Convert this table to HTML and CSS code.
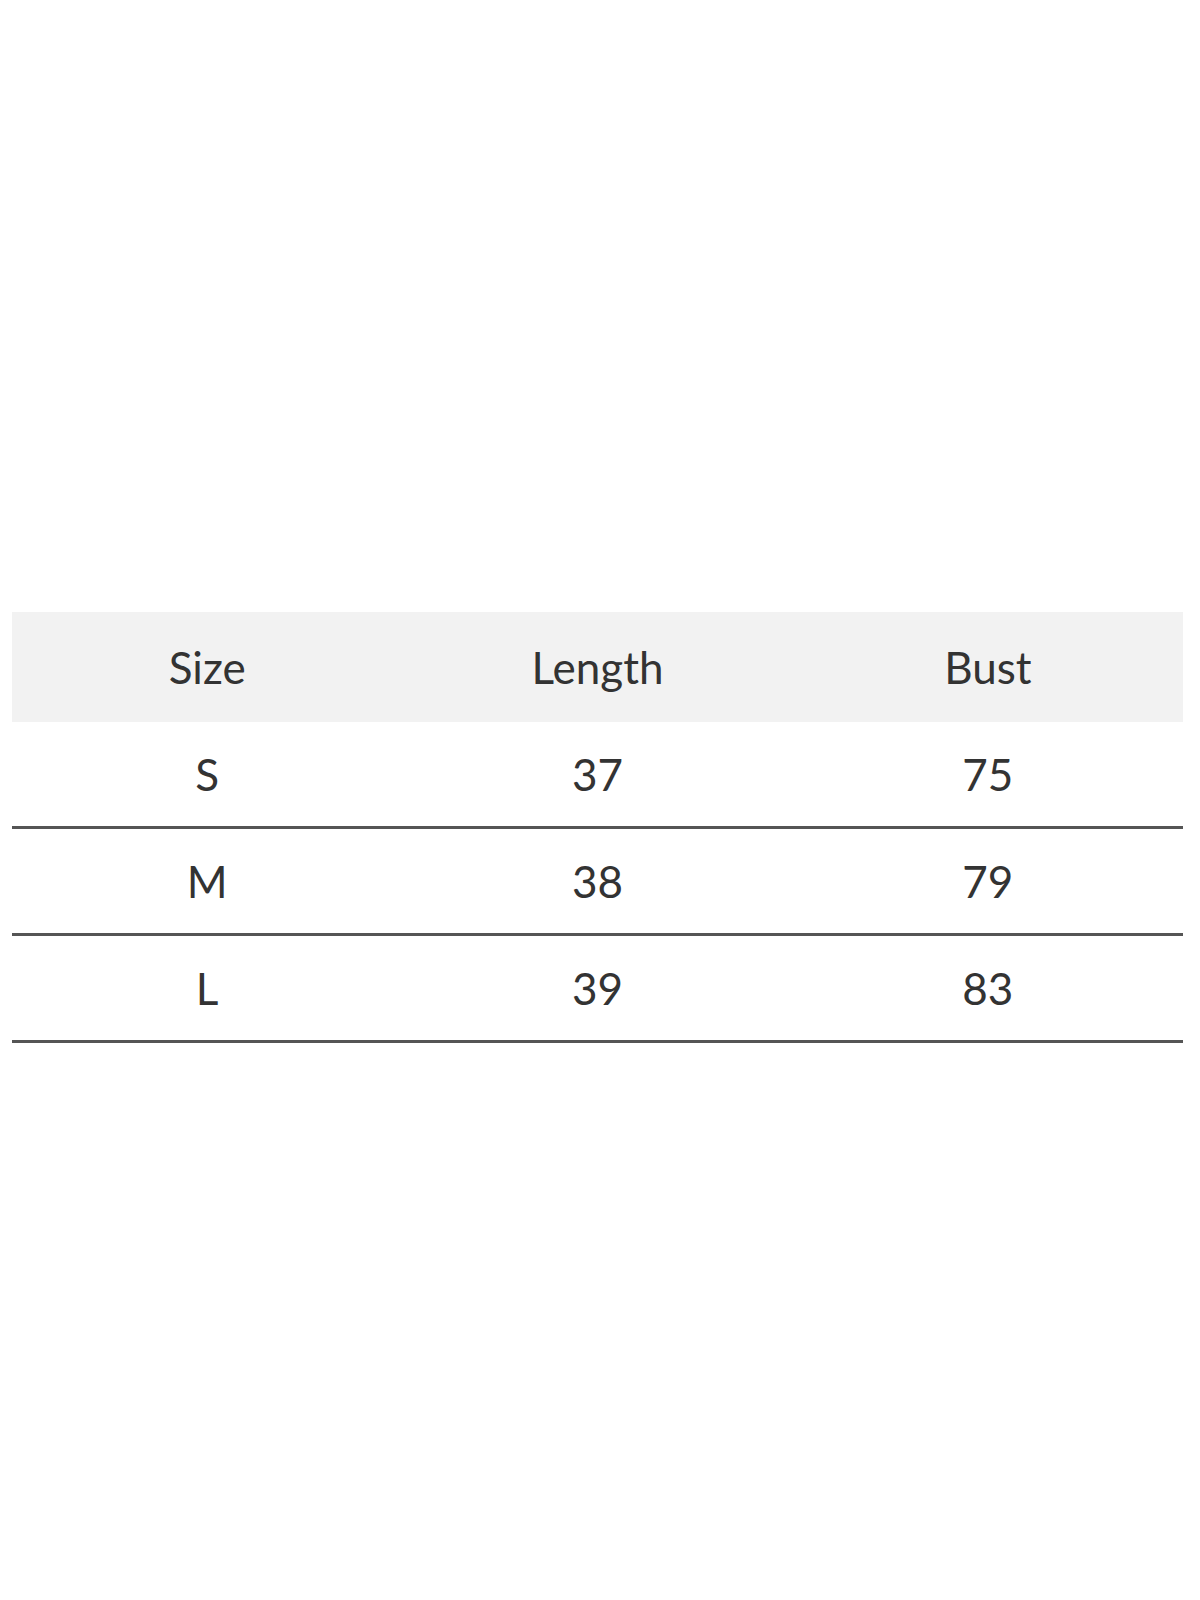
FILE: index.html
```html
<!DOCTYPE html>
<html>
<head>
<meta charset="utf-8">
<link rel="stylesheet" href="styles.css">
</head>
<body>
<div class="page">
  <div class="table">
    <div class="row head">
      <div class="cell">Size</div>
      <div class="cell">Length</div>
      <div class="cell">Bust</div>
    </div>
    <div class="row">
      <div class="cell">S</div>
      <div class="cell">37</div>
      <div class="cell">75</div>
    </div>
    <div class="row">
      <div class="cell">M</div>
      <div class="cell">38</div>
      <div class="cell">79</div>
    </div>
    <div class="row">
      <div class="cell">L</div>
      <div class="cell">39</div>
      <div class="cell">83</div>
    </div>
  </div>
</div>
</body>
</html>
```

FILE: styles.css
```css
html, body {
  margin: 0;
  padding: 0;
  background: #ffffff;
}
.page {
  width: 1200px;
  height: 1600px;
  box-sizing: border-box;
  padding: 612px 17px 0 12px;
}
.table {
  display: flex;
  flex-direction: column;
  font-family: Lato, "Liberation Sans", sans-serif;
  font-size: 44px;
  color: #333333;
}
.row {
  display: grid;
  grid-template-columns: 1fr 1fr 1fr;
  height: 104px;
  border-bottom: 3px solid #555555;
}
.row.head {
  height: 110px;
  background: #f2f2f2;
  border-bottom: none;
}
.cell {
  display: flex;
  align-items: center;
  justify-content: center;
}
```
